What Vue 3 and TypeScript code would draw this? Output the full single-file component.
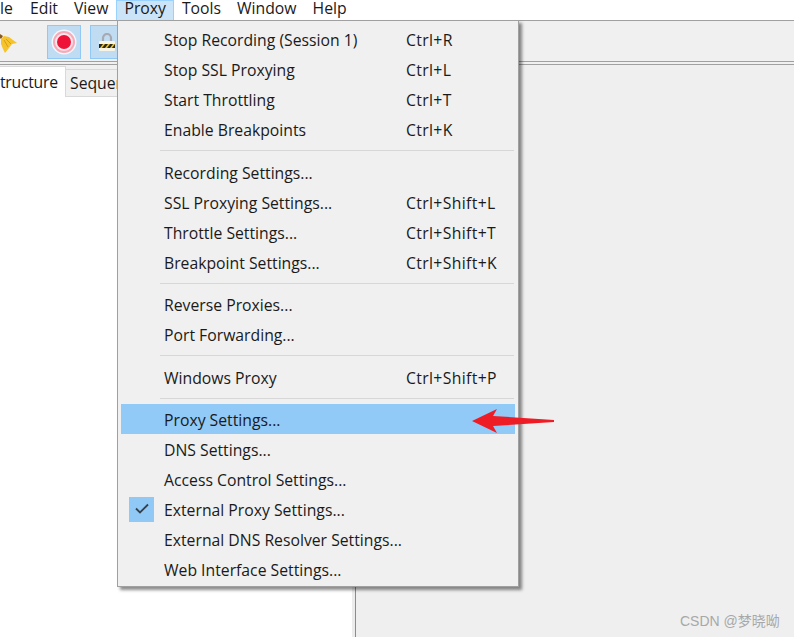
<script setup lang="ts">
interface Item { label?: string; key?: string; sep?: boolean; active?: boolean; checked?: boolean }
const items: Item[] = [
  { label: 'Stop Recording (Session 1)', key: 'Ctrl+R' },
  { label: 'Stop SSL Proxying', key: 'Ctrl+L' },
  { label: 'Start Throttling', key: 'Ctrl+T' },
  { label: 'Enable Breakpoints', key: 'Ctrl+K' },
  { sep: true },
  { label: 'Recording Settings...' },
  { label: 'SSL Proxying Settings...', key: 'Ctrl+Shift+L' },
  { label: 'Throttle Settings...', key: 'Ctrl+Shift+T' },
  { label: 'Breakpoint Settings...', key: 'Ctrl+Shift+K' },
  { sep: true },
  { label: 'Reverse Proxies...' },
  { label: 'Port Forwarding...' },
  { sep: true },
  { label: 'Windows Proxy', key: 'Ctrl+Shift+P' },
  { sep: true },
  { label: 'Proxy Settings...', active: true },
  { label: 'DNS Settings...' },
  { label: 'Access Control Settings...' },
  { label: 'External Proxy Settings...', checked: true },
  { label: 'External DNS Resolver Settings...' },
  { label: 'Web Interface Settings...' },
]
const menus = ['le', 'Edit', 'View', 'Proxy', 'Tools', 'Window', 'Help']
</script>

<template>
  <div class="app">
    <div class="menubar">
      <span v-for="m in menus" :key="m" class="mb-item" :class="{ open: m === 'Proxy', first: m === 'le' }">{{ m }}</span>
    </div>
    <div class="toolbar">
      <svg class="broom" width="18" height="24" viewBox="0 0 18 24">
        <path d="M0 3 L3 5 L1 8 L0 7Z" fill="#8a5a1c" />
        <path d="M1 8 L4 5 L9 6 L17 12 L12 13 L9 17 L5 22 L3 18 L1 13Z" fill="#f5c32c" />
        <path d="M4 9 L8 16 M6 8 L11 13" stroke="#dc9c16" stroke-width="1" fill="none" />
      </svg>
      <button class="tool">
        <svg width="26" height="26" viewBox="0 0 26 26">
          <circle cx="13" cy="13" r="12.5" fill="#fff" opacity=".8" />
          <circle cx="13" cy="13" r="11" fill="#f7a9b8" />
          <circle cx="13" cy="13" r="9" fill="#fbe6ea" />
          <circle cx="13" cy="13" r="7" fill="#ef1238" />
        </svg>
      </button>
      <button class="tool">
        <svg width="16" height="19" viewBox="0 0 16 19">
          <path d="M4 9V5a4 4 0 0 1 8 0v4" fill="none" stroke="#a9a9b2" stroke-width="2.2" />
          <rect x="0" y="8" width="16" height="10" rx="1" fill="#f7f4e6" />
          <rect x="0" y="11" width="16" height="4" fill="#2a281e" />
          <path d="M1 15l3-4h2l-3 4zM6 15l3-4h2l-3 4zM11 15l3-4h2l-3 4z" fill="#e8c22a" />
        </svg>
      </button>
    </div>
    <div class="rule"></div>
    <div class="panes">
      <div class="left">
        <div class="tabs">
          <span class="tab on">tructure</span>
          <span class="tab">Sequence</span>
        </div>
      </div>
      <div class="splitter"></div>
      <div class="right"></div>
    </div>

    <div class="menu">
      <template v-for="(it, i) in items" :key="i">
        <div v-if="it.sep" class="sep"></div>
        <div v-else class="row" :class="{ active: it.active }">
          <span class="gutter">
            <span v-if="it.checked" class="check">
              <svg width="14" height="12" viewBox="0 0 14 12"><path d="M1 5.5 L5 9.5 L13 1.5" fill="none" stroke="#34404c" stroke-width="1.8" /></svg>
            </span>
          </span>
          <span class="label">{{ it.label }}</span>
          <span class="key">{{ it.key }}</span>
        </div>
      </template>
    </div>

    <svg class="arrow" width="84" height="32" viewBox="0 0 84 32">
      <path d="M1 16 L26 4 L22 11 L83 15 L83 17 L22 21 L26 28 Z" fill="#ee1c25" />
    </svg>
    <span class="mark">CSDN @梦晓呦</span>
  </div>
</template>

<style>
html, body { margin: 0; overflow: hidden; }
</style>

<style scoped>
.app {
  position: relative;
  width: 794px;
  height: 637px;
  overflow: hidden;
  display: flex;
  flex-direction: column;
  background: #f0f0f0;
  font-family: "Open Sans", "Noto Sans", sans-serif;
  font-size: 15.75px;
  color: #1a1a1a;
}
.menubar {
  height: 21px;
  box-sizing: border-box;
  flex: none;
  display: flex;
  background: #fff;
  border-bottom: 1px solid #a0a0a0;
}
.mb-item {
  height: 20px;
  line-height: 16px;
  padding: 0 8px;
  box-sizing: border-box;
}
.mb-item.first { padding: 0 7px 0 0; width: 22px; }
.mb-item.open { background: #cce4f8; border: 1px solid #99d1ff; border-bottom: 0; padding: 0 7px; line-height: 14px; }
.toolbar {
  height: 40px;
  box-sizing: border-box;
  flex: none;
  display: flex;
  align-items: flex-start;
  padding-top: 4px;
  background: #f0f0f0;
}
.broom { margin: 6px 29px 0 0; }
.tool {
  width: 34px;
  height: 34px;
  padding: 0;
  margin-right: 9px;
  border: 1px solid #90c8f6;
  background: #bfdcf2;
  display: flex;
  align-items: center;
  justify-content: center;
  flex: none;
}
.rule {
  height: 2px;
  flex: none;
  border-top: 1px solid #a0a0a0;
  border-bottom: 1px solid #a0a0a0;
}
.panes { flex: 1; display: flex; min-height: 0; }
.left { width: 352px; flex: none; background: #fff; }
.tabs {
  display: flex;
  align-items: flex-end;
  height: 32px;
  background: #f0f0f0;
  border-bottom: 1px solid #d9d9d9;
  box-sizing: border-box;
}
.tab {
  height: 27px;
  line-height: 27px;
  padding: 0 8px 0 4px;
  background: #f0f0f0;
  border: 1px solid #d9d9d9;
  border-bottom: 0;
  border-left: 0;
  box-sizing: border-box;
  white-space: nowrap;
}
.tab.on {
  width: 66px;
  height: 31px;
  line-height: 30px;
  padding: 0;
  letter-spacing: -.25px;
  background: #fff;
  position: relative;
  top: 1px;
  border-top: 1px solid #d9d9d9;
}
.splitter { width: 3px; flex: none; background: #ececec; border-right: 1px solid #8c8c8c; }
.right { flex: 1; background: #efefef; }
.menu {
  position: absolute;
  left: 117px;
  top: 20px;
  width: 402px;
  height: 567px;
  box-sizing: border-box;
  padding: 3px 3px;
  background: #f0f0f0;
  border: 1px solid #a0a0a0;
  box-shadow: 3px 3px 3px rgba(0, 0, 0, .45);
}
.row {
  height: 30px;
  display: flex;
  align-items: center;
}
.label, .key { position: relative; top: 1px; }
.row.active { background: #91c9f7; }
.gutter { width: 43px; flex: none; display: flex; justify-content: flex-start; }
.check {
  width: 25px;
  height: 25px;
  margin-left: 8px;
  background: #90c8f6;
  display: flex;
  align-items: center;
  justify-content: center;
}
.label { width: 242px; flex: none; white-space: nowrap; }
.key { white-space: nowrap; letter-spacing: .35px; }
.sep {
  height: 1px;
  margin: 6px 1px 5.5px 39px;
  background: #d7d7d7;
}
.arrow { position: absolute; left: 471px; top: 405px; }
.mark {
  position: absolute;
  left: 680px;
  top: 611px;
  font-size: 14px;
  line-height: 20px;
  color: #a8a8a8;
  font-family: "Liberation Sans", "Noto Sans CJK SC", sans-serif;
}
</style>
